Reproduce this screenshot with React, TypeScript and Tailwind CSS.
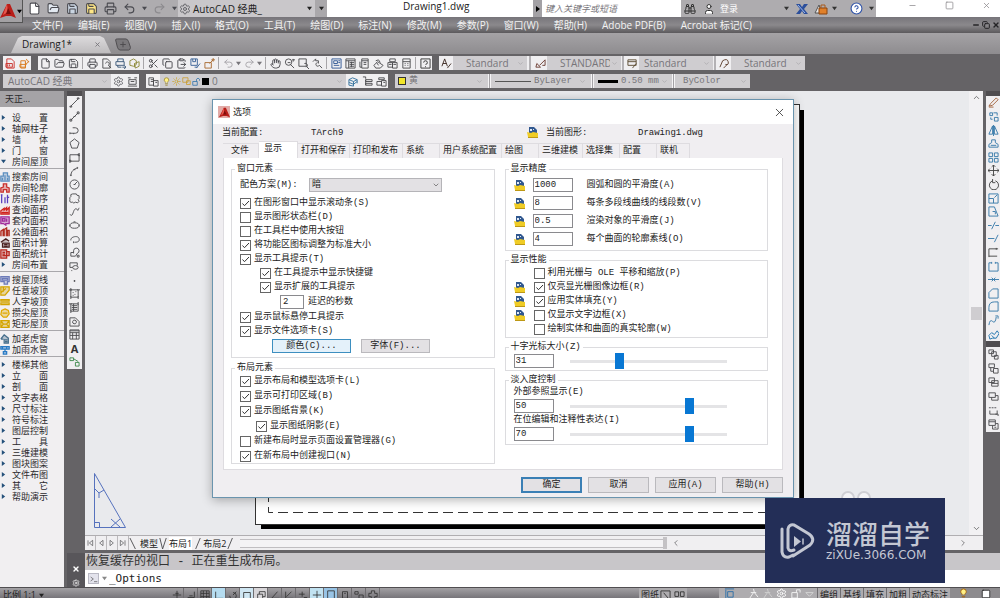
import type { ReactNode } from "react";
import {
  Binoculars,
  ChevronDown,
  ChevronUp,
  CircleHelp,
  ClipboardPaste,
  Copy,
  File,
  FolderOpen,
  Hand,
  Lightbulb,
  Minus,
  Printer,
  Redo2,
  Save,
  Scissors,
  Settings,
  Square,
  Sun,
  Undo2,
  User,
  X,
} from "lucide-react";

const ui = "font-['Open_Sans','Noto_Sans_CJK_SC',sans-serif]";
const song = "font-['Liberation_Mono','Noto_Sans_CJK_SC',monospace]";

const menus = [
  "文件(F)", "编辑(E)", "视图(V)", "插入(I)", "格式(O)", "工具(T)", "绘图(D)", "标注(N)",
  "修改(M)", "参数(P)", "窗口(W)", "帮助(H)", "Adobe PDF(B)", "Acrobat 标记(C)",
];

const wide = "\u3000\u3000";

type PanelRow = { text: string; color?: string; d?: string; open?: boolean };

const panelGroups: PanelRow[][] = [
  [{ text: `设${wide}置` }, { text: "轴网柱子" }, { text: `墙${wide}体` }, { text: `门${wide}窗` }, { text: "房间屋顶", open: true }],
  [
    { text: "搜索房间", color: "#5c8fc0", d: "M1 11V5h3V1h5v4h2v6zM3 7v3M6 4v6M9 7v3" },
    { text: "房间轮廓", color: "#c9302c", d: "M1 11V6l3-1V1h4v4l3 1v5H8V8H4v3z" },
    { text: "房间排序", color: "#5a3fc0", d: "M2 1v10M1 1h2M6 4v7M9 1v10M8 4h3" },
    { text: "查询面积", color: "#d0211c", d: "M1 11h10V3L8 6V3L5 6V4L1 7zM2 9h8" },
    { text: "套内面积", color: "#a02a9a", d: "M1 1h10v8H7v2L4 9H1zM3 3h3v3H3zM8 3v4" },
    { text: "公摊面积", color: "#b02c20", d: "M1 11V5l3-2v8M5 11V3l3-2v10M9 11V4h2v7" },
    { text: "面积计算", color: "#4a2020", d: "M1 5l6-4 4 3M3 6h8v5H3zM5 8h4M5 10h4" },
    { text: "面积统计", color: "#b8281f", d: "M1 1h7v10H1zM3 4h3M3 6h3M8 3h3v5H6M3 8h3" },
    { text: "房间布置" },
  ],
  [
    { text: "搜屋顶线", color: "#6c7ab8", d: "M1 2h10v6H9v3H5V8H1zM3 4h6v2H3z" },
    { text: "任意坡顶", color: "#d4a400", d: "M1 1h10v4L6 11H1zM1 8l6-5M4 1v6" },
    { text: "人字坡顶", color: "#d4a400", d: "M1 3h10v2H1zM1 7h10v2H1z" },
    { text: "攒尖屋顶", color: "#e0a800", d: "M6 1l4 2 1 4-3 4H4L1 8l1-5zM3 6h6" },
    { text: "矩形屋顶", color: "#d4a400", d: "M1 2h10v8H1zM1 2l3 4-3 4M11 2L8 6l3 4M4 6h4" },
  ],
  [
    { text: "加老虎窗", color: "#476f8c", d: "M1 6l4-5 5 4v6H5V6M1 6h3M6 7h3M6 9h3" },
    { text: "加雨水管", color: "#2779c4", d: "M1 2h10v3H1zM3 2v3M8 2v3M6 5v3M4 8h4v3H4z" },
  ],
  [
    "楼梯其他", `立${wide}面`, `剖${wide}面`, "文字表格", "尺寸标注", "符号标注", "图层控制",
    `工${wide}具`, "三维建模", "图块图案", "文件布图", `其${wide}它`, "帮助演示",
  ].map((text) => ({ text })),
];

const drawIcons = [
  "M2 10L10 2M1 10h2v1H1zM9 1h2v1H9z",
  "M2 10l8-8M1 9h2v2H1zM9 1h2v2H9zM5 6h2",
  "M1 9h6a3 3 0 0 0 0-6H4M1 8v2M5 9v1",
  "M6 1l5 4-2 6H3L1 5z",
  "M1 3h10v7H1zM0 9h2v2H0zM10 2h2v2h-2z",
  "M2 11C2 6 5 3 10 2M1 10h2M5 4h2M9 1v2",
  "M6 1a5 5 0 1 0 0 10A5 5 0 0 0 6 1M6 6l3-3M5 6h2",
  "M4 1h4q0 2 3 2v3q-2 1 0 3-1 3-4 1-2 2-3 0-4 1-3-3Q0 5 2 4q-1-3 2-3",
  "M1 9c2 3 3 0 4-3s3-4 4-2 1 0 2-2",
  "M6 3a5 3 0 1 0 0 6 5 3 0 0 0 0-6M5 2h2M1 5v2M11 5v2",
  "M2 7C1 3 10 1 11 5s-3 4-5 4M5 8v2",
  "M5 7V4a3 3 0 1 1 4 3L7 10H2V6h3M9 9h2v2H9z",
  "M4 7H1V2h8v3M4 7a3 2 0 1 0 6 0 3 2 0 1 0-6 0M3 10v1",
  "M5.500 6h1v1h-1z",
  "M2 2h8v8H2zM0 2h3M2 0v3M9 2h3M10 9v3M2 9v3M4 5h1M6 7h1M7 4h1M4 8h1",
  "M2 2h8v8H2zM0 2h3M10 0v3M2 9v3M3 4h6M3 6h6M3 8h6M5 2v8",
  "M1 2h6l4 4v5H1zM4 6a2 2 0 1 1 4 1 2 2 0 1 1-4-1",
  "M1 1h10v10H1zM1 4h10M1 7h10M4 4v7M8 4v7M1 2h10",
];

const modifyIcons: [string, string][] = [
  ["M1 10l2-3 6-6 2 2-6 6zM1 11h5", "#a0603a"],
  ["M2 2h3v3H2zM7 7h4v4H7zM6 2h4v3M3 7v2h2", "#3678a8"],
  ["M5 1v9H1zM7 1v9h4zM6 0v12", "#3678a8"],
  ["M1 10V7l3-2V2h4v3l3 2v3zM3 8h6", "#3678a8"],
  ["M1 1h4v4H1zM7 1h4v4H7zM1 7h4v4H1zM7 7h4v4H7z", "#3678a8"],
  ["M6 0v12M0 6h12M4 2l2-2 2 2M4 10l2 2 2-2M2 4L0 6l2 2M10 4l2 2-2 2", "#444"],
  ["M5 2a5 5 0 1 0 3 0M5 0v4h3", "#444"],
  ["M1 1h10v10H1zM1 6h5v5M7 5l3-3", "#3678a8"],
  ["M1 1h6l4 10H1zM5 6h3v3", "#3678a8"],
  ["M0 6h4M8 6h4M4 10l4-8", "#3678a8"],
  ["M0 6h7M7 10l4-8", "#3678a8"],
  ["M1 11V2h10M1 10h9M9 1v2", "#444"],
  ["M4 2H1v9h10V2H8M4 1v2M8 1v2", "#3678a8"],
  ["M0 6h12M4 4l2 2-2 2M8 4L6 6l2 2", "#3678a8"],
  ["M1 11V5l4-4h6v10z", "#3678a8"],
  ["M1 11V7q0-6 6-6h4v10z", "#3678a8"],
  ["M1 11q1-7 4-4t4-5M8 1h3v3", "#3678a8"],
  ["M1 7l3-3 3 2 3-4 2 3-3 5H5L2 11zM4 7l3 3", "#1b72ad"],
];

const orderIcons = [
  "M1 1h5v4H1zM4 3h5v5H4zM7 7h4v4H7z",
  "M1 1h6v4H1zM3 5v4h3M6 6h5v5H6z",
  "M1 1h6v5H1zM4 4h7v6H4zM4 7h7",
  "M1 2h7v5H1zM8 5h3v5H4V7",
  "M1 3h2M4 3h2M7 3h2M2 6v4h8V6M8 10h3v2",
  "M1 1h7v6H1zM1 3h7M5 7v4h6V5H8M7 9h2",
];

function Glyph({ d, color = "#4b4b4f", size = "size-[11px]" }: { d: string; color?: string; size?: string }) {
  return (
    <svg viewBox="0 0 12 12" className={`${size} shrink-0`} fill="none" stroke={color} strokeWidth="1" aria-hidden="true">
      <path d={d} />
    </svg>
  );
}

function Cell({ children }: { children: ReactNode }) {
  return <span className="flex w-[14px] shrink-0 items-center justify-center">{children}</span>;
}

function Sep() {
  return <span className="mx-[2px] h-[12px] w-px shrink-0 bg-[#a8a6a9]" />;
}

function Caret() {
  return (
    <svg viewBox="0 0 6 6" className="size-[5px] shrink-0" aria-hidden="true">
      <path d="M0 1h6L3 5z" fill="currentColor" />
    </svg>
  );
}

function Combo({ value, label, className, pad = "pl-[13px]" }: { value: string; label: string; className: string; pad?: string }) {
  return (
    <span className={`relative flex h-[14px] shrink-0 items-center bg-[#cfcdd0] text-[#77757a] ${className}`}>
      <select aria-label={label} className={`h-full w-full appearance-none bg-transparent pr-[11px] leading-[14px] ${pad}`}>
        <option>{value}</option>
      </select>
      <ChevronDown className="pointer-events-none absolute right-[3px] size-[7px] text-[#a09ea2]" />
    </span>
  );
}

function AutodeskMark({ className }: { className: string }) {
  return (
    <svg viewBox="0 0 16 16" className={className} aria-hidden="true">
      <path d="M0 15L7 1h3l6 14-5-2H6z" fill="#b81d18" />
      <path d="M7 1L3 12l5-3z" fill="#e8564c" />
      <path d="M8 5l3 6H6z" fill="#7a0d0b" />
    </svg>
  );
}

function TitleBar() {
  return (
    <header className={`${ui} flex h-[17px] shrink-0 bg-[#aeacaf] pl-[28px] text-[10px] leading-[16px] text-[#222]`}>
      <div className="flex w-[150px] shrink-0 items-center gap-[6px] text-[#4a4a50]">
        <File className="size-[13px] fill-white" />
        <FolderOpen className="size-[13px] fill-slate-200" />
        <Save className="size-[13px] fill-slate-300" />
        <Save className="size-[13px] fill-amber-200" />
        <Printer className="size-[13px]" />
        <Undo2 className="size-[13px]" />
        <Caret />
        <Redo2 className="size-[13px] text-[#8c8a8e]" />
        <Caret />
      </div>
      <div className="flex w-[137px] shrink-0 items-center gap-[2px] bg-[#c9c7ca] px-[1px]">
        <Settings className="size-[12px] text-[#66666b]" />
        <span>AutoCAD 经典_</span>
        <span className="ml-auto mr-[2px]"><Caret /></span>
      </div>
      <div className="flex w-[12px] shrink-0 items-center justify-center bg-[#aaa8ab]"><Caret /></div>
      <div className="flex-1 bg-white pl-[76px] leading-[12px]">Drawing1.dwg</div>
      <div className="flex w-[9px] items-center justify-center bg-[#a3a1a5]">
        <svg viewBox="0 0 6 6" className="size-[6px]" aria-hidden="true">
          <path d="M1 0v6l4-3z" />
        </svg>
      </div>
      <input
        aria-label="键入关键字或短语"
        placeholder="键入关键字或短语"
        className="w-[139px] bg-white pl-[3px] text-[9px] italic outline-none placeholder:text-[#77757a]"
      />
      <div className="flex w-[195px] shrink-0 items-center pl-[3px] text-[#333]">
        <Binoculars className="size-[12px]" />
        <User className="ml-[7px] size-[12px] fill-white" />
        <span className="ml-[5px] text-[9px] text-white">登录</span>
        <span className="ml-[46px]"><Caret /></span>
        <svg viewBox="0 0 12 12" className="ml-[7px] size-[12px]" aria-hidden="true">
          <path d="M0 1h4l2 3 2-3h4L8 6l4 5H8L6 8l-2 3H0l4-5z" fill="#2c4f9c" />
          <path d="M2 2l7 8" stroke="#9db9ec" />
        </svg>
        <svg viewBox="0 0 14 12" className="ml-[6px] h-[12px] w-[14px]" aria-hidden="true">
          <path d="M1 10l4-8 3 8z" fill="#e8e8ea" stroke="#555" />
          <path d="M5 5h8v6H5z" fill="#e0802a" stroke="#8a4511" />
          <path d="M7 5V2h4v3" fill="none" stroke="#a85a1c" />
        </svg>
        <span className="ml-[4px]"><Caret /></span>
        <CircleHelp className="ml-[13px] size-[13px] fill-white text-[#2e52a8]" />
        <span className="ml-[6px]"><Caret /></span>
      </div>
      <div className="flex w-[124px] shrink-0 items-start gap-[28px] bg-white pl-[32px] pt-px text-[#8c8a8e]">
        <Minus className="size-[9px]" />
        <Square className="size-[9px]" />
        <X className="size-[9px]" />
      </div>
    </header>
  );
}

function MenuBar() {
  return (
    <nav className={`${ui} flex h-[16px] shrink-0 items-center gap-[15px] bg-linear-to-b from-[#77757a] via-[#8b898c] to-[#5c5a5d] pl-[32px] text-[10px] leading-[16px] text-[#f2f2f2]`}>
      {menus.map((item) => (
        <a key={item} href="#menu" className="shrink-0 whitespace-nowrap">
          {item}
        </a>
      ))}
      <span className="ml-auto flex shrink-0 items-center gap-[2px] text-[#252427]">
        <Minus className="size-[8px]" strokeWidth={4} />
        <Copy className="size-[8px]" strokeWidth={3} />
        <X className="size-[8px]" strokeWidth={4} />
      </span>
    </nav>
  );
}

function FileTabs() {
  return (
    <div className={`${ui} flex h-[21px] shrink-0 items-end bg-linear-to-b from-[#a5a3a6] to-[#8e8c8f] pb-px pl-[11px] text-[10px]`}>
      <div className="flex h-[17px] w-[100px] items-center justify-between bg-linear-to-b from-[#dddbdd] to-[#bebcbe] pl-[11px] pr-[10px] text-[#222] [clip-path:polygon(0_100%,7%_12%,11%_0,89%_0,93%_12%,100%_100%)]">
        <span>Drawing1*</span>
        <X className="size-[7px] text-[#77757a]" strokeWidth={3} />
      </div>
      <svg viewBox="0 0 18 14" className="mb-[2px] ml-[3px] h-[13px] w-[18px]" aria-hidden="true">
        <path d="M1 2q0-1 2-1h9q2 0 3 3l2 6q0 3-2 3H6q-2 0-3-3z" fill="#7a787b" stroke="#4c4a4d" />
        <path d="M6 7h6M9 4v6" stroke="#4c4a4d" />
      </svg>
    </div>
  );
}

function StandardBar() {
  const s = "size-[11px] shrink-0 text-[#45454a]";
  return (
    <div className={`${ui} flex h-[18px] shrink-0 items-center bg-[#656366] pl-[3px] text-[10px]`}>
      <div className="flex h-[14px] w-[28px] bg-[#f0eff1]">
        <Cell><Glyph d="M2 1h5l3 3v7H2zM1 6h7v4H1zM3 7v2M5 7v2" color="#c9302c" /></Cell>
        <Cell><Glyph d="M2 3h5v8H2zM1 7h6v3H1zM8 1l1 2 2 1-2 1-1 2-1-2" color="#d9781a" /></Cell>
      </div>
      <div className="ml-[7px] flex h-[14px] items-center bg-[#f0eff1]">
        <Cell><File className={s} /></Cell>
        <Cell><FolderOpen className={s} /></Cell>
        <Cell><Save className={s} /></Cell>
        <Sep />
        <Cell><Printer className={s} /></Cell>
        <Cell><Glyph d="M2 1h5l3 3v7H2zM5 6a2 2 0 1 1 3 2l3 3" /></Cell>
        <Cell><Glyph d="M3 4V1h6v3M1 4h9v4H1zM3 8v2h4M8 10h4M10 8l2 2-2 2" color="#3a5878" /></Cell>
        <Cell><Glyph d="M1 3l4-2 3 2v4L5 9 1 8zM6 6l5-2v5l-4 2zM6 6v4" color="#8d8a3a" /></Cell>
        <Sep />
        <Cell><Scissors className={s} /></Cell>
        <Cell><Copy className={s} /></Cell>
        <Cell><ClipboardPaste className={s} /></Cell>
        <Cell><Glyph d="M1 1h7v7H1zM3 1v3h3V1M7 11l4-5M5 10h3" color="#365f95" /></Cell>
        <Cell><Glyph d="M1 5h7v6H1zM6 6l4-4M10 0v4M8 2h4" color="#a86a30" /></Cell>
        <Sep />
        <Cell><Undo2 className="size-[11px] text-[#a5a3a7]" /></Cell>
        <span className="mx-px text-[#77757a]"><Caret /></span>
        <Cell><Redo2 className="size-[11px] text-[#a5a3a7]" /></Cell>
        <span className="mx-px text-[#77757a]"><Caret /></span>
        <Sep />
        <Cell><Hand className={s} /></Cell>
        <Cell><Glyph d="M5 1a3 3 0 1 0 0 7 3 3 0 0 0 0-7M7 7l4 4M4 5h3M9 2h3M10 1v3" /></Cell>
        <Cell><Glyph d="M1 1h8v8H1zM7 6a2 2 0 1 1 2 4M9 9l3 3" /></Cell>
        <Cell><Glyph d="M1 4l3-3v2h3v3M6 5a2 2 0 1 0 2 3l3 3" /></Cell>
        <Sep />
        <Cell><Glyph d="M1 1h10v10H1zM3 3h4v3H3zM3 8h6M8 3h2M8 5h2" color="#2f5794" /></Cell>
        <Cell><Glyph d="M1 1h10v10H1zM1 3h10M4 3v8M5 5h5M5 7h5M5 9h5M7 4v6" /></Cell>
        <Cell><Glyph d="M3 1h7v10H3zM3 3h7M5 5h3M5 7h3M1 4v6h2" /></Cell>
        <Cell><Glyph d="M1 8l4-4 6 4-3 3H3zM4 5l2 3M3 3l3-1 2 3" /></Cell>
        <Cell><Glyph d="M3 1h6v3H3zM1 5h5v5H1zM6 5h5v6H6zM7 7h3M2 7h3" /></Cell>
        <Cell><Glyph d="M2 1h8v10H2zM2 4h8M4 6h1M7 6h1M4 8h1M7 8h1" /></Cell>
        <Sep />
        <Cell><Glyph d="M1 1h10v10H1zM4 5q0-2 2-2t2 2-2 2M6 9v1" color="#333" /></Cell>
      </div>
      <div className="ml-[7px] flex h-[14px] items-center bg-[#f0eff1]">
        <Cell><Glyph d="M1 9l3-8 3 8M2 6h4M7 11l4-5" color="#3c2a22" /></Cell>
        <Combo value="Standard" label="文字样式" className="w-[74px]" />
        <span className="mx-[2px] h-[14px] w-[2px] bg-[#b4b2b5]" />
        <Cell><Glyph d="M1 10h5l-4-4zM5 8l6-6M8 8h3V2" color="#6a3a30" /></Cell>
        <Combo value="STANDARD" label="标注样式" className="w-[74px]" />
        <span className="mx-[1px] h-[14px] w-[2px] bg-[#b4b2b5]" />
        <Cell><Glyph d="M1 2h9v6H1zM1 4h9M6 11l4-5" color="#5a4a30" /></Cell>
        <Combo value="Standard" label="表格样式" className="w-[74px]" pad="pl-[5px]" />
        <span className="mx-[1px] h-[14px] w-[2px] bg-[#b4b2b5]" />
        <Cell><Glyph d="M1 10l3-7q5-3 6 1t-3 3M5 11l4-4" color="#5a3a28" /></Cell>
        <Combo value="Standard" label="多重引线样式" className="w-[74px]" />
      </div>
    </div>
  );
}

function LayerBar() {
  return (
    <div className={`${ui} flex h-[19px] shrink-0 items-start bg-[#656366] pl-[3px] pt-[2px] text-[10px]`}>
      <div className="flex h-[14px] items-center bg-[#f0eff1]">
        <Combo value="AutoCAD 经典" label="工作空间" className="w-[108px]" pad="pl-[5px]" />
        <Cell><Settings className="size-[11px] text-[#66666b]" /></Cell>
        <Cell><Glyph d="M1 2h3M8 2h3M1 11h10M2 4h8v5H2zM4 6h4" /></Cell>
      </div>
      <div className="ml-[7px] flex h-[14px] items-center bg-[#f0eff1]">
        <Cell><Glyph d="M1 2h5v8H1zM3 4h3M3 6h3M6 5h5v6H6zM8 7h2" /></Cell>
        <span className="relative flex h-[14px] w-[186px] items-center gap-[1px] bg-[#cfcdd0] pl-[2px]">
          <Lightbulb className="size-[9px] fill-yellow-200 text-[#96802a]" />
          <Sun className="size-[9px] text-[#c9a227]" />
          <Glyph d="M1 1h7v6H1zM6 5h5v5H6z" color="#c99a27" size="size-[9px]" />
          <Glyph d="M1 6h6v5H1zM6 6V3q2-3 4 0v2" color="#2a6da8" size="size-[9px]" />
          <span className="size-[7px] bg-black" />
          <select aria-label="图层" className="h-full flex-1 appearance-none bg-transparent pl-[2px] text-[#77757a]">
            <option>0</option>
          </select>
          <ChevronDown className="pointer-events-none absolute right-[3px] size-[7px] text-[#a09ea2]" />
        </span>
        <Cell><Glyph d="M1 4l4-2 5 2-4 2zM1 7l5 2 4-3M1 4v6l5 1V6M10 4v4" color="#35729c" /></Cell>
        <Cell><Glyph d="M1 1h3v2M4 4h7v2H4zM4 8h7v2H4zM4 4v6" /></Cell>
        <Cell><Glyph d="M3 2h6v2H3zM1 6h5v4H1zM6 5h5v6H6zM8 7h2" /></Cell>
      </div>
      <div className={`${song} ml-[7px] flex h-[14px] items-center bg-[#cfcdd0] pl-[3px] text-[9px]`}>
        <span className="size-[8px] shrink-0 border border-[#333] bg-[#f2e52a]" />
        <Combo value="黄" label="颜色" className="w-[80px]" pad="pl-[3px]" />
        <span className="mx-[2px] h-[14px] w-[3px] border-x border-[#f5f4f6] bg-[#a3a1a5]" />
        <span className="ml-[2px] h-px w-[36px] bg-[#555]" />
        <Combo value="ByLayer" label="线型" className="w-[58px]" pad="pl-[3px]" />
        <span className="mx-[2px] h-[14px] w-[3px] border-x border-[#f5f4f6] bg-[#a3a1a5]" />
        <span className="ml-[2px] h-[3px] w-[20px] bg-black" />
        <Combo value="0.50 mm" label="线宽" className="w-[53px]" pad="pl-[3px]" />
        <span className="mx-[1px] h-[14px] w-[3px] border-x border-[#f5f4f6] bg-[#a3a1a5]" />
        <Combo value="ByColor" label="打印样式" className="w-[74px]" pad="pl-[7px]" />
      </div>
    </div>
  );
}

function LeftPanel() {
  return (
    <aside className={`${ui} mr-[3px] w-[64px] shrink-0 overflow-hidden bg-[#f1eff1] text-[9px] leading-[11px] text-[#2b2a2d]`}>
      <h2 className="mb-[5px] h-[16px] bg-[#a5a3a6] pl-[5px] leading-[16px]">天正...</h2>
      {panelGroups.map((group, i) => (
        <ul key={i} className="border-b border-[#a9a7ab] pb-px pt-[2px] first-of-type:pt-0 last:border-0">
          {group.map((row) => (
            <li key={row.text} className="flex h-[11px] items-center whitespace-pre">
              <span className="flex w-[12px] shrink-0 items-center">
                {row.d ? (
                  <svg viewBox="0 0 12 12" className="size-[10px]" fill={row.color} fillOpacity="0.35" stroke={row.color} strokeWidth="1.500" aria-hidden="true">
                    <path d={row.d} />
                  </svg>
                ) : (
                  <svg viewBox="0 0 6 6" className="ml-px size-[5px]" fill="#24507a" aria-hidden="true">
                    <path d={row.open ? "M0 1h6L3 5z" : "M1 0v6l4-3z"} />
                  </svg>
                )}
              </span>
              {row.text}
            </li>
          ))}
        </ul>
      ))}
    </aside>
  );
}

function DrawToolbar() {
  return (
    <div className="mr-[3px] flex w-[15px] shrink-0 flex-col">
      <div className="h-[5px] bg-[#4f4d50]" />
      <div className="flex h-[273px] flex-col items-center justify-around bg-[#f0eff1]">
        {drawIcons.map((d) => (
          <Glyph key={d} d={d} />
        ))}
        <span className={`${ui} text-[11px] font-bold leading-[11px] text-[#333]`}>A</span>
        <Glyph d="M1 2h4v3H1zM5 3l5 3M7 7h4v4H7z" color="#3c8a4c" />
      </div>
    </div>
  );
}

function ModifyToolbar() {
  return (
    <div className="ml-[3px] w-[14px] shrink-0 overflow-hidden">
      <div className="h-[5px] bg-[#4f4d50]" />
      <div className="flex h-[245px] flex-col items-center justify-around bg-[#f0eff1]">
        {modifyIcons.map(([d, color]) => (
          <Glyph key={d} d={d} color={color} />
        ))}
      </div>
      <div className="h-[6px] bg-[#4f4d50]" />
      <div className="flex h-[85px] flex-col items-center justify-around bg-[#f0eff1]">
        {orderIcons.map((d) => (
          <Glyph key={d} d={d} />
        ))}
      </div>
    </div>
  );
}

function Canvas() {
  return (
    <div className="flex min-w-0 flex-1 flex-col">
      <div className="flex min-h-0 flex-1">
        <div className="relative flex-1 overflow-hidden bg-[#e9eaed]">
          <div className="absolute left-[170px] top-[13px] h-[421px] w-[545px] border border-[#333] bg-white shadow-[5px_5px_0_-1px_#000]">
            <svg className="h-full w-full" fill="none" stroke="#333" aria-hidden="true">
              <path d="M12.500 12V407.500H532" strokeDasharray="10 5" />
            </svg>
          </div>
          <svg viewBox="0 0 32 56" className="absolute left-[9px] top-[382px] h-[56px] w-[32px]" fill="none" stroke="#5672bd" aria-hidden="true">
            <path d="M.5.500V54.500H31.500zM.5 49.500h5v5M1 16l4 4 5-3M5 20v5M17 46l9 8M26 46l-9 8" />
          </svg>
          <svg viewBox="0 0 32 16" className="absolute left-[755px] top-[399px] h-[16px] w-[32px]" fill="#f4f4f6" stroke="#cfcfd4" strokeWidth="2" aria-hidden="true">
            <circle cx="8" cy="8" r="6" />
            <circle cx="24" cy="8" r="6" />
          </svg>
        </div>
        <div className="flex w-[14px] shrink-0 flex-col items-center justify-between bg-[#f2f1f3] py-[2px]">
          <ChevronUp className="size-[9px] text-[#555]" />
          <span className="mt-[200px] h-[13px] w-[11px] bg-[#cfcdd0]" />
          <ChevronDown className="mt-[200px] size-[9px] text-[#555]" />
        </div>
      </div>
      <div className={`${ui} flex h-[15px] shrink-0 items-center border-t border-[#b0aeb1] bg-[#f0eff1] text-[9px] leading-[13px] text-[#222]`}>
        {["M3 2v8M10 2L5 6l5 4z", "M9 2L4 6l5 4z", "M3 2l5 4-5 4z", "M2 2l5 4-5 4zM9 2v8"].map((d) => (
          <button key={d} type="button" aria-label="布局" className="flex h-full w-[11px] items-center justify-center border-r border-[#bbb9bc]">
            <Glyph d={d} size="size-[8px]" />
          </button>
        ))}
        <Glyph d="M1 0l6 12" />
        <span>模型</span>
        <Glyph d="M2 0l3 12M9 0L5 12" />
        <span className="bg-white">布局1</span>
        <Glyph d="M4 12L9 0" />
        <span>布局2</span>
        <Glyph d="M2 12L7 0" />
        <span className="ml-[3px] h-[9px] flex-[430] border-y border-[#c0bec1] bg-[#f4f3f5]" />
        <span className="h-[12px] w-[4px] bg-[#c4c2c5]" />
        <span className="flex flex-[300] justify-between pl-[5px] pr-[16px]">
          <Glyph d="M8 2L4 6l4 4" size="size-[8px]" />
          <Glyph d="M4 2l4 4-4 4" size="size-[8px]" />
        </span>
      </div>
    </div>
  );
}

function CommandLine() {
  return (
    <div className="flex h-[37px] shrink-0 pt-[3px]">
      <div className="flex w-[18px] shrink-0 flex-col items-center gap-[6px] bg-[#58565a] pt-[12px] text-white">
        <X className="size-[8px]" strokeWidth={4} />
        <Settings className="size-[8px]" />
      </div>
      <div className="flex-1 bg-white text-[#333]">
        <p className={`${song} h-[17px] bg-[#c8c6c9] pl-px text-[12px] leading-[18px]`}>恢复缓存的视口 - 正在重生成布局。</p>
        <label className="flex h-[17px] items-center pl-[3px] font-['DejaVu_Sans_Mono',monospace] text-[11px] leading-[16px]">
          <span className="flex size-[11px] items-center justify-center border border-[#b9b9c4] bg-[#e3e3ec]">
            <Glyph d="M1 3l4 3-4 3M6 10h5" size="size-[8px]" />
          </span>
          <span className="ml-[3px] mr-[2px] text-[#888]"><Caret /></span>
          <input aria-label="命令" defaultValue="_Options" className="flex-1 bg-transparent text-[#222] outline-none" />
        </label>
      </div>
    </div>
  );
}

const statusIcons: [string, string][] = [
  ["M6 1v10M1 6h10M4 4h4", ""],
  ["M2 9h8V2M4 7h4", ""],
  ["M1 1h10v10H1zM4 1v10M8 1v10M1 4h10M1 8h10", ""],
  ["M2 2v8h9", "bg-[#b5dcf0]"],
  ["M2 7a4 4 0 1 0 4-4M6 6l4-4", ""],
  ["M2 3h8v8H2z", "bg-[#cfe6f2]"],
  ["M2 5h6v6H2zM4 5V2h7v6H8", "bg-[#d8d6d9]"],
  ["M9 2L2 10h9", ""],
  ["M2 2v8h9M3 8l6-6", ""],
  ["M1 5h7M5 2v6M7 9h4", ""],
  ["M6 1v10M1 6h10", "bg-[#c1e2f1]"],
  ["M2 1h8v10H2z", "bg-[#98c4e6]"],
  ["M3 2h6v8H3zM5 4h2", ""],
  ["M1 2h4v3H1zM6 6h5v5H6z", ""],
  ["M4 1h4v3h3v4H8v3H4V8H1V4h3z", ""],
];

function StatusBar() {
  return (
    <footer className={`${ui} flex h-[11px] shrink-0 items-start overflow-hidden border-t border-[#504e51] bg-linear-to-b from-[#a3a1a4] to-[#77757a] text-[9px] leading-[14px] text-[#222]`}>
      <span className="flex w-[170px] shrink-0 items-center gap-[3px] pl-[3px]">
        比例 1:1 <Caret />
      </span>
      {statusIcons.map(([d, bg]) => (
        <span key={d} className={`flex h-[14px] w-[14px] shrink-0 items-center justify-center border-r border-[#6f6d70] ${bg}`}>
          <Glyph d={d} color="#333" size="size-[10px]" />
        </span>
      ))}
      <span className="ml-auto flex shrink-0 bg-[#aeacaf] pl-[2px]">
        图纸
        <Cell><Glyph d="M1 1h10v10H1zM4 3l5 6" color="#333" /></Cell>
        <Cell><Glyph d="M1 2h4v5H1zM7 2h4v5H7zM1 10h10" color="#333" /></Cell>
      </span>
      <span className="ml-[32px] flex shrink-0 bg-[#aeacaf] pl-[4px]">
        <Cell><Glyph d="M1 1h10M2 2v9M4 4h6v6H4z" color="#2a6da8" /></Cell>
        <span className="w-[10px]" />
        <Cell><Glyph d="M6 1l1 4 4 5M6 5l-4 6M3 5h6" color="#f4f4f4" /></Cell>
        <Cell><Glyph d="M6 1l1 4 4 5M6 5l-4 6M3 5h6" color="#d0d0d0" /></Cell>
        <Cell><Settings className="size-[11px] text-white" /></Cell>
        <Cell><Glyph d="M2 5h6v6H2zM7 5V2h4v3" color="#f4f4f4" /></Cell>
        <Cell><Glyph d="M2 5h8L6 9z" color="#d5d5d5" /></Cell>
      </span>
      {["编组", "基线", "填充", "加粗", "动态标注"].map((t) => (
        <button key={t} type="button" className="shrink-0 border-l border-[#6f6d70] bg-[#aeacaf] px-[2px]">
          {t}
        </button>
      ))}
      <span className="flex shrink-0 items-center gap-[12px] bg-[#8d8b8e] pl-[8px] pr-[9px]">
        <Lightbulb className="size-[11px] fill-yellow-200 text-yellow-700" />
        <Square className="size-[10px] fill-white" />
      </span>
    </footer>
  );
}

function Check({ label, checked = false, className = "" }: { label: string; checked?: boolean; className?: string }) {
  return (
    <label className={`flex h-[14px] items-center gap-[3px] whitespace-nowrap ${className}`}>
      <span className="grid size-[11px] shrink-0">
        <input type="checkbox" defaultChecked={checked} className="peer col-start-1 row-start-1 size-[11px] appearance-none border border-[#666] bg-white" />
        <svg viewBox="0 0 11 11" className="pointer-events-none invisible col-start-1 row-start-1 size-[11px] peer-checked:visible" fill="none" stroke="#333" aria-hidden="true">
          <path d="M2.500 5.500l2 2.200L9 3" />
        </svg>
      </span>
      {label}
    </label>
  );
}

function Group({ title, className = "", children }: { title: string; className?: string; children: ReactNode }) {
  return (
    <fieldset className="min-w-0 border border-[#dcdcdf]">
      <legend className="ml-[3px] h-[12px] px-[2px] leading-[12px]">{title}</legend>
      <div className={`pl-[8px] ${className}`}>{children}</div>
    </fieldset>
  );
}

function DrawingMark({ hidden = false }: { hidden?: boolean }) {
  return (
    <svg viewBox="0 0 11 11" className={`size-[11px] shrink-0 ${hidden ? "invisible" : ""}`} aria-hidden="true">
      <path d="M2 0h5l3 3v5H2z" fill="#31588f" />
      <path d="M3 2h2v2H3zM6 2h1v1H6z" fill="#dfe9f5" />
      <path d="M0 5l4 1 2-1 5 1v4H1z" fill="#f0cc25" />
      <path d="M1 10h10v1H1z" fill="#bd9815" />
    </svg>
  );
}

const box = "h-[14px] w-[40px] border border-[#8a8a8e] bg-white pl-[1px] leading-[12px] outline-none";

function Precision({ value, label }: { value: string; label: string }) {
  return (
    <label className="flex h-[14px] items-center whitespace-nowrap">
      <DrawingMark />
      <input defaultValue={value} className={`${box} ml-[8px] mr-[14px]`} />
      {label}
    </label>
  );
}

function SliderRow({ value, pos, max, label }: { value: string; pos: number; max: number; label: string }) {
  return (
    <div className="flex h-[16px] items-center">
      <input aria-label={label} defaultValue={value} className={box} />
      <input
        type="range"
        aria-label={label}
        defaultValue={pos}
        max={max}
        className="ml-[16px] h-[16px] w-[157px] appearance-none bg-transparent [&::-webkit-slider-runnable-track]:h-[3px] [&::-webkit-slider-runnable-track]:bg-[#e4e4e6] [&::-webkit-slider-thumb]:mt-[-7px] [&::-webkit-slider-thumb]:h-[16px] [&::-webkit-slider-thumb]:w-[9px] [&::-webkit-slider-thumb]:appearance-none [&::-webkit-slider-thumb]:bg-[#0877d3]"
      />
    </div>
  );
}

const dialogTabs: [string, string][] = [
  ["文件", "w-[36px] pl-[8px]"],
  ["显示", "w-[39px] pl-[5px]"],
  ["打开和保存", "w-[52px] pl-[3px]"],
  ["打印和发布", "w-[53px] pl-[3px]"],
  ["系统", "w-[37px] pl-[3px]"],
  ["用户系统配置", "w-[62px] pl-[3px]"],
  ["绘图", "w-[37px] pl-[3px]"],
  ["三维建模", "w-[44px] pl-[3px]"],
  ["选择集", "w-[37px] pl-[3px]"],
  ["配置", "w-[37px] pl-[3px]"],
  ["联机", "w-[33px] pl-[3px]"],
];

function OptionsDialog() {
  return (
    <section
      role="dialog"
      aria-label="选项"
      className={`${song} absolute left-[212px] top-[99px] w-[582px] border border-[#6a94ae] bg-[#f0eef1] pb-[4px] text-[9px] leading-[12px] text-[#222] shadow-[0_2px_10px_rgba(0,0,0,0.3)]`}
    >
      <div className="flex h-[24px] items-center bg-white pl-[5px] pr-[7px]">
        <span className="flex size-[12px] items-center justify-center bg-[#e2aca8]">
          <AutodeskMark className="size-[11px]" />
        </span>
        <h1 className={`${ui} ml-[3px] flex-1`}>选项</h1>
        <button type="button" aria-label="关闭">
          <X className="size-[13px] text-[#333]" strokeWidth={1.5} />
        </button>
      </div>

      <div className="flex h-[17px] items-center pl-[9px]">
        <span className="w-[89px]">当前配置:</span>
        <span className="flex-1">TArch9</span>
        <DrawingMark />
        <span className="ml-[8px] w-[92px]">当前图形:</span>
        <span className="w-[155px]">Drawing1.dwg</span>
      </div>

      <div role="tablist" className="flex h-[17px] items-end pl-[10px]">
        {dialogTabs.map(([name, cls]) => (
          <button
            key={name}
            type="button"
            role="tab"
            aria-selected={name === "显示"}
            className={`h-[15px] shrink-0 whitespace-nowrap border-r border-t border-[#dedce0] text-left aria-selected:h-[17px] aria-selected:bg-white aria-selected:pb-[3px] ${cls}`}
          >
            {name}
          </button>
        ))}
      </div>

      <div className="mx-[10px] grid grid-cols-2 gap-[10px] border-x border-b border-[#dedce0] bg-white pb-[5px] pl-[7px] pr-[14px] pt-[5px]">
        <div className="flex flex-col gap-[4px]">
          <Group title="窗口元素" className="pb-[4px]">
            <label className="mb-[4px] mt-[3px] flex h-[14px] items-center">
              <span className="w-[69px] whitespace-nowrap">配色方案(M):</span>
              <span className="relative flex items-center">
                <select className="h-[14px] w-[133px] appearance-none border border-[#b5b4b8] bg-[#e3e1e4] pl-[2px] leading-[12px]">
                  <option>暗</option>
                </select>
                <ChevronDown className="pointer-events-none absolute right-[2px] size-[8px] text-[#555]" />
              </span>
            </label>
            <Check label="在图形窗口中显示滚动条(S)" checked />
            <Check label="显示图形状态栏(D)" />
            <Check label="在工具栏中使用大按钮" />
            <Check label="将功能区图标调整为标准大小" checked />
            <Check label="显示工具提示(T)" checked />
            <Check label="在工具提示中显示快捷键" checked className="pl-[20px]" />
            <Check label="显示扩展的工具提示" checked className="pl-[20px]" />
            <label className="flex h-[16px] items-center gap-[4px] pl-[40px]">
              <input defaultValue="2" className="h-[14px] w-[24px] border border-[#8a8a8e] pl-[2px] leading-[12px] outline-none" />
              延迟的秒数
            </label>
            <Check label="显示鼠标悬停工具提示" checked />
            <Check label="显示文件选项卡(S)" checked />
            <div className="mt-px flex gap-[10px] pl-[32px]">
              <button type="button" className="h-[14px] w-[79px] border border-[#3d8fc0] bg-[#e4f1fa]">颜色(C)...</button>
              <button type="button" className="h-[14px] w-[69px] border border-[#bab9bd] bg-[#e3e1e4]">字体(F)...</button>
            </div>
          </Group>
          <Group title="布局元素">
            <div className="flex flex-col gap-px">
              <Check label="显示布局和模型选项卡(L)" checked />
              <Check label="显示可打印区域(B)" checked />
              <Check label="显示图纸背景(K)" checked />
              <Check label="显示图纸阴影(E)" checked className="pl-[16px]" />
              <Check label="新建布局时显示页面设置管理器(G)" />
              <Check label="在新布局中创建视口(N)" checked />
            </div>
          </Group>
        </div>

        <div className="flex flex-col gap-[3px]">
          <Group title="显示精度" className="pb-[4px]">
            <div className="mt-[3px] flex flex-col gap-[4px]">
              <Precision value="1000" label="圆弧和圆的平滑度(A)" />
              <Precision value="8" label="每条多段线曲线的线段数(V)" />
              <Precision value="0.5" label="渲染对象的平滑度(J)" />
              <Precision value="4" label="每个曲面的轮廓素线(O)" />
            </div>
          </Group>
          <Group title="显示性能" className="pb-px">
            <div className="flex items-center gap-[9px]"><DrawingMark hidden /><Check label="利用光栅与 OLE 平移和缩放(P)" /></div>
            <div className="flex items-center gap-[9px]"><DrawingMark /><Check label="仅亮显光栅图像边框(R)" checked /></div>
            <div className="flex items-center gap-[9px]"><DrawingMark /><Check label="应用实体填充(Y)" checked /></div>
            <div className="flex items-center gap-[9px]"><DrawingMark /><Check label="仅显示文字边框(X)" /></div>
            <div className="flex items-center gap-[9px]"><DrawingMark hidden /><Check label="绘制实体和曲面的真实轮廓(W)" /></div>
          </Group>
          <Group title="十字光标大小(Z)" className="pb-px">
            <SliderRow value="31" pos={31} max={100} label="十字光标大小(Z)" />
          </Group>
          <Group title="淡入度控制" className="pb-[2px]">
            <p>外部参照显示(E)</p>
            <SliderRow value="50" pos={70} max={90} label="外部参照显示(E)" />
            <p>在位编辑和注释性表达(I)</p>
            <SliderRow value="70" pos={70} max={90} label="在位编辑和注释性表达(I)" />
          </Group>
        </div>
      </div>

      <div className="mt-[7px] flex justify-end gap-[6px] pr-[10px]">
        {["确定", "取消", "应用(A)", "帮助(H)"].map((name) => (
          <button
            key={name}
            type="button"
            className="h-[16px] w-[61px] border border-[#bab9bd] bg-[#e3e1e4] first:border-2 first:border-[#3a7fb5]"
          >
            {name}
          </button>
        ))}
      </div>
    </section>
  );
}

function Watermark() {
  return (
    <div className="absolute left-[765px] top-[498px] flex h-[85px] w-[180px] items-center gap-[11px] bg-[#232e57] pl-[14px] text-[#c3c7d3]">
      <svg viewBox="0 0 36 38" className="h-[38px] w-[36px] shrink-0" fill="none" stroke="#c3c7d3" strokeWidth="3" strokeLinecap="round" aria-hidden="true">
        <path d="M3 7v23q1 6 7 5l4-2" />
        <path d="M15 28q-5 2-6-2V7q1-5 6-4l15 9q7 5 1 11L14 34" />
        <path d="M15 14v11l7-5.500z" fill="#c3c7d3" stroke="none" />
        <path d="M24 17v5" strokeWidth="1.500" />
      </svg>
      <div className="pb-[4px]">
        <p className="font-['Noto_Sans_CJK_SC',sans-serif] text-[26px] font-medium leading-[32px]">溜溜自学</p>
        <p className="font-['DejaVu_Sans',sans-serif] text-[12px] leading-[12px]">ziXUe.3066.COM</p>
      </div>
    </div>
  );
}

export default function App() {
  return (
    <div className="relative flex h-screen flex-col overflow-hidden bg-[#656366]">
      <TitleBar />
      <MenuBar />
      <button type="button" aria-label="应用程序菜单" className="absolute left-0 top-0 flex h-[23px] w-[23px] items-center gap-px border-b border-r border-[#555] bg-[#a3a1a4]">
        <AutodeskMark className="size-[16px]" />
        <Caret />
      </button>
      <FileTabs />
      <StandardBar />
      <LayerBar />
      <main className="flex min-h-0 flex-1">
        <LeftPanel />
        <div className="flex min-w-0 flex-1 flex-col">
          <div className="flex min-h-0 flex-1">
            <DrawToolbar />
            <Canvas />
            <ModifyToolbar />
          </div>
          <CommandLine />
        </div>
      </main>
      <StatusBar />
      <OptionsDialog />
      <Watermark />
    </div>
  );
}
